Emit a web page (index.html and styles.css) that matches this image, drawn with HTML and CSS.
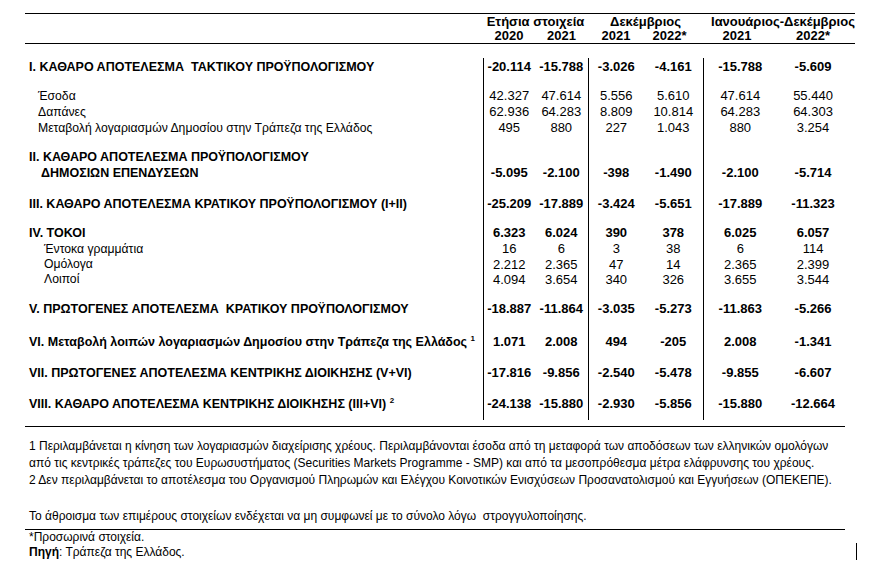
FILE: index.html
```html
<!DOCTYPE html>
<html lang="el">
<head>
<meta charset="utf-8">
<title>Κρατικός προϋπολογισμός</title>
<link rel="stylesheet" href="styles.css">
</head>
<body>
<main class="page">
  <table class="budget">
    <colgroup>
      <col class="c-label"><col class="c-a1"><col class="c-a2"><col class="c-d1"><col class="c-d2"><col class="c-j1"><col class="c-j2"><col class="c-pad">
    </colgroup>
    <thead>
      <tr class="h1">
        <th></th>
        <th colspan="2">Ετήσια στοιχεία</th>
        <th colspan="2">Δεκέμβριος</th>
        <th colspan="3" class="jan">Ιανουάριος-Δεκέμβριος</th>
      </tr>
      <tr class="h2">
        <th></th>
        <th>2020</th><th>2021</th><th>2021</th><th class="y22">2022*</th><th class="y21j">2021</th><th>2022*</th><th></th>
      </tr>
    </thead>
    <tbody>
      <tr class="sp"><td colspan="8"></td></tr>
      <tr class="b r-i"><td class="lbl">I. ΚΑΘΑΡΟ ΑΠΟΤΕΛΕΣΜΑ&nbsp; ΤΑΚΤΙΚΟΥ ΠΡΟΫΠΟΛΟΓΙΣΜΟΥ</td><td class="v">-20.114</td><td>-15.788</td><td class="v">-3.026</td><td>-4.161</td><td class="v">-15.788</td><td>-5.609</td><td></td></tr>
      <tr class="r-g28"><td class="sub">Έσοδα</td><td class="v">42.327</td><td>47.614</td><td class="v">5.556</td><td>5.610</td><td class="v">47.614</td><td>55.440</td><td></td></tr>
      <tr class="r16"><td class="sub">Δαπάνες</td><td class="v">62.936</td><td>64.283</td><td class="v">8.809</td><td>10.814</td><td class="v">64.283</td><td>64.303</td><td></td></tr>
      <tr class="r16"><td class="sub">Μεταβολή λογαριασμών Δημοσίου στην Τράπεζα της Ελλάδος</td><td class="v">495</td><td>880</td><td class="v">227</td><td>1.043</td><td class="v">880</td><td>3.254</td><td></td></tr>
      <tr class="b r-g29"><td class="lbl">II. ΚΑΘΑΡΟ ΑΠΟΤΕΛΕΣΜΑ ΠΡΟΫΠΟΛΟΓΙΣΜΟΥ</td><td class="v"></td><td></td><td class="v"></td><td></td><td class="v"></td><td></td><td></td></tr>
      <tr class="b r16"><td class="lbl cont">ΔΗΜΟΣΙΩΝ ΕΠΕΝΔΥΣΕΩΝ</td><td class="v">-5.095</td><td>-2.100</td><td class="v">-398</td><td>-1.490</td><td class="v">-2.100</td><td>-5.714</td><td></td></tr>
      <tr class="b r-g31"><td class="lbl">III. ΚΑΘΑΡΟ ΑΠΟΤΕΛΕΣΜΑ ΚΡΑΤΙΚΟΥ ΠΡΟΫΠΟΛΟΓΙΣΜΟΥ (I+II)</td><td class="v">-25.209</td><td>-17.889</td><td class="v">-3.424</td><td>-5.651</td><td class="v">-17.889</td><td>-11.323</td><td></td></tr>
      <tr class="b r-g29"><td class="lbl">IV. ΤΟΚΟΙ</td><td class="v">6.323</td><td>6.024</td><td class="v">390</td><td>378</td><td class="v">6.025</td><td>6.057</td><td></td></tr>
      <tr class="r16"><td class="sub2">Έντοκα γραμμάτια</td><td class="v">16</td><td>6</td><td class="v">3</td><td>38</td><td class="v">6</td><td>114</td><td></td></tr>
      <tr class="r15"><td class="sub2">Ομόλογα</td><td class="v">2.212</td><td>2.365</td><td class="v">47</td><td>14</td><td class="v">2.365</td><td>2.399</td><td></td></tr>
      <tr class="r15"><td class="sub2">Λοιποί</td><td class="v">4.094</td><td>3.654</td><td class="v">340</td><td>326</td><td class="v">3.655</td><td>3.544</td><td></td></tr>
      <tr class="b r-g30"><td class="lbl">V. ΠΡΩΤΟΓΕΝΕΣ ΑΠΟΤΕΛΕΣΜΑ&nbsp; ΚΡΑΤΙΚΟΥ ΠΡΟΫΠΟΛΟΓΙΣΜΟΥ</td><td class="v">-18.887</td><td>-11.864</td><td class="v">-3.035</td><td>-5.273</td><td class="v">-11.863</td><td>-5.266</td><td></td></tr>
      <tr class="b r-g33"><td class="lbl">VI. Μεταβολή λοιπών λογαριασμών Δημοσίου στην Τράπεζα της Ελλάδος <sup>1</sup></td><td class="v">1.071</td><td>2.008</td><td class="v">494</td><td>-205</td><td class="v">2.008</td><td>-1.341</td><td></td></tr>
      <tr class="b r-g31"><td class="lbl">VII. ΠΡΩΤΟΓΕΝΕΣ ΑΠΟΤΕΛΕΣΜΑ ΚΕΝΤΡΙΚΗΣ ΔΙΟΙΚΗΣΗΣ (V+VI)</td><td class="v">-17.816</td><td>-9.856</td><td class="v">-2.540</td><td>-5.478</td><td class="v">-9.855</td><td>-6.607</td><td></td></tr>
      <tr class="b r-g31"><td class="lbl">VIII. ΚΑΘΑΡΟ ΑΠΟΤΕΛΕΣΜΑ ΚΕΝΤΡΙΚΗΣ ΔΙΟΙΚΗΣΗΣ (III+VI) <sup>2</sup></td><td class="v">-24.138</td><td>-15.880</td><td class="v">-2.930</td><td>-5.856</td><td class="v">-15.880</td><td>-12.664</td><td></td></tr>
      <tr class="tail"><td></td><td class="v"></td><td></td><td class="v"></td><td></td><td class="v"></td><td></td><td></td></tr>
    </tbody>
  </table>

  <section class="notes">
    <p>1 Περιλαμβάνεται η κίνηση των λογαριασμών διαχείρισης χρέους. Περιλαμβάνονται έσοδα από τη μεταφορά των αποδόσεων των ελληνικών ομολόγων<br>από τις κεντρικές τράπεζες του Ευρωσυστήματος (Securities Markets Programme - SMP) και από τα μεσοπρόθεσμα μέτρα ελάφρυνσης του χρέους.</p>
    <p>2 Δεν περιλαμβάνεται το αποτέλεσμα του Οργανισμού Πληρωμών και Ελέγχου Κοινοτικών Ενισχύσεων Προσανατολισμού και Εγγυήσεων (ΟΠΕΚΕΠΕ).</p>
    <p class="round">Το άθροισμα των επιμέρους στοιχείων ενδέχεται να μη συμφωνεί με το σύνολο λόγω&nbsp; στρογγυλοποίησης.</p>
  </section>

  <footer class="source">
    <div class="source-text">
      <p>*Προσωρινά στοιχεία.</p>
      <p><b>Πηγή</b>: Τράπεζα της Ελλάδος.</p>
    </div>
    <span class="bar"></span>
  </footer>
</main>
</body>
</html>
```

FILE: styles.css
```css
html, body {
  margin: 0;
  padding: 0;
  background: #fff;
}
body {
  font-family: "Liberation Sans", Arial, sans-serif;
  color: #000;
  font-size: 13px;
}
.page {
  padding: 13px 0 0 25px;
}
.budget {
  border-collapse: collapse;
  table-layout: fixed;
  width: 830px;
  border-top: 1px solid #000;
}
.c-label { width: 458px; }
.c-a1 { width: 52px; }
.c-a2 { width: 53px; }
.c-d1 { width: 56px; }
.c-d2 { width: 59px; }
.c-j1 { width: 74px; }
.c-j2 { width: 72px; }
.c-pad { width: 6px; }

.budget th,
.budget td {
  padding: 0;
  text-align: center;
  white-space: nowrap;
}
.budget th {
  font-weight: bold;
  font-size: 13px;
}
.h1 th { height: 15px; line-height: 15px; vertical-align: bottom; }
.h2 th { height: 14px; line-height: 14px; vertical-align: bottom; border-bottom: 1px solid #000; }
.budget th.jan { text-align: left; padding-left: 8px; }
.budget th.y22 { padding-right: 8px; }
.budget th.y21j { padding-right: 6px; }

.budget td {
  line-height: 16px;
  vertical-align: bottom;
  font-size: 13px;
}
.budget td.v { border-left: 1px solid #000; }
.budget td.lbl,
.budget td.sub,
.budget td.sub2 { text-align: left; }
.budget td.lbl { padding-left: 4px; font-size: 12.5px; }
.budget td.lbl.cont { padding-left: 16px; }
.budget td.sub { padding-left: 13px; font-size: 12.2px; }
.budget td.sub2 { padding-left: 19px; font-size: 12.2px; }
tr.b td { font-weight: bold; }

tr.sp td { height: 14px; }
tr.r-i td { height: 18px; line-height: 18px; vertical-align: middle; }
tr.r16 td { height: 16px; }
tr.r15 td { height: 15px; line-height: 15px; }
tr.r-g28 td { height: 28px; }
tr.r-g29 td { height: 29px; }
tr.r-g30 td { height: 30px; }
tr.r-g31 td { height: 31px; }
tr.r-g33 td { height: 33px; }
tr.tail td { height: 8px; }

sup {
  font-size: 8px;
  line-height: 0;
  vertical-align: 5px;
}

.notes {
  width: 820px;
  margin-top: 6px;
  border-top: 1px solid #000;
  border-bottom: 1px solid #000;
  padding: 11px 0 4px 4px;
  box-sizing: border-box;
  font-size: 12px;
  line-height: 17px;
}
.notes p { margin: 0; }
.notes .round { margin-top: 19px; }

.source {
  display: flex;
  justify-content: space-between;
  width: 832px;
  font-size: 12px;
  line-height: 15px;
}
.source-text { padding-left: 4px; }
.source p { margin: 0; }
.bar {
  width: 1px;
  height: 17px;
  margin-top: 13px;
  background: #000;
}
```
